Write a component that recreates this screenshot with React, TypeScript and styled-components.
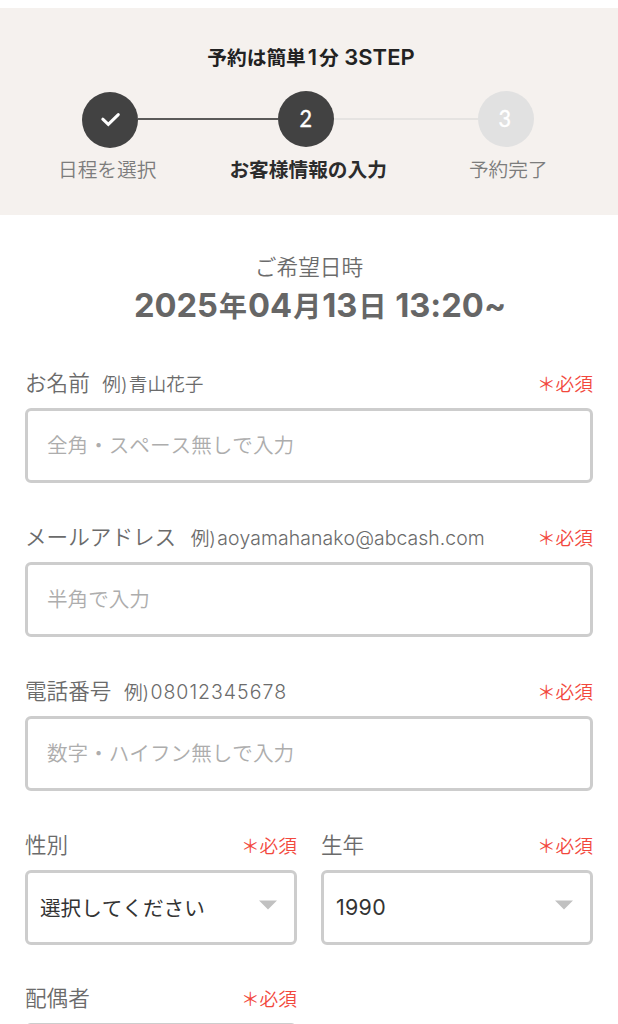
import React from "react";
import styled, { createGlobalStyle } from "styled-components";

const GlobalStyle = createGlobalStyle`
  * { box-sizing: border-box; }
  html, body { margin: 0; background: #fff; }
  body {
    width: 618px;
    height: 1024px;
    overflow: hidden;
    font-family: Inter, "Noto Sans CJK JP", sans-serif;
    font-weight: 350;
    font-kerning: none;
    color: #6b6b6b;
    font-feature-settings: "calt" 0;
  }
`;

const Page = styled.main`
  height: 1024px;
  padding-top: 8px;
  overflow: hidden;
`;

const StepPanel = styled.header`
  height: 207px;
  padding-top: 34px;
  background: #f5f1ee;
`;

const StepTitle = styled.h1`
  margin: 0;
  padding-left: 4px;
  font-size: 19.7px;
  line-height: 30px;
  height: 30px;
  font-weight: 600;
  text-align: center;
  color: #222;
`;

const TitleLatin = styled.span<{ $inset?: number }>`
  margin: 0 ${(p) => p.$inset ?? 0}px;
  font-size: 22px;
`;

const Track = styled.div`
  display: flex;
  align-items: center;
  height: 56px;
  margin: 18.5px 84px 0 82px;
`;

const StepDot = styled.div<{ $muted?: boolean; $drop?: number }>`
  display: flex;
  flex: none;
  align-items: center;
  justify-content: center;
  width: 56px;
  height: 56px;
  margin-top: ${(p) => p.$drop ?? 0}px;
  padding-right: ${(p) => (p.$muted ? 3 : 0)}px;
  border-radius: 50%;
  background: ${(p) => (p.$muted ? "#e1e1e1" : "#424242")};
  color: #fff;
  font-family: Lato, sans-serif;
  font-size: 23.5px;
  font-weight: 400;
  -webkit-text-stroke: 0.4px #fff;
`;

const Digit = styled.span`
  transform: translateY(-1px) scaleX(0.92);
`;

const Connector = styled.div<{ $muted?: boolean }>`
  flex: ${(p) => (p.$muted ? 144 : 140)} 1 0;
  height: 2px;
  background: ${(p) => (p.$muted ? "#e5e3e1" : "#5b5a59")};
`;

const StepLabels = styled.div`
  display: flex;
  margin: 8px 0 0 58px;
`;

const StepLabel = styled.span<{ $active?: boolean }>`
  margin-right: ${(p) => (p.$active ? 82 : 73)}px;
  font-size: 19.7px;
  line-height: 30px;
  white-space: nowrap;
  font-weight: ${(p) => (p.$active ? 600 : 350)};
  color: ${(p) => (p.$active ? "#2c2c2c" : "#7c7c7c")};
`;

const Schedule = styled.section`
  padding-top: 36px;
  text-align: center;
`;

const ScheduleLabel = styled.div`
  font-size: 21.7px;
  line-height: 32px;
`;

const ScheduleDate = styled.div`
  height: 44px;
  padding-left: 22px;
  font-size: 32.7px;
  line-height: 45px;
  font-weight: 700;
  white-space: nowrap;
  color: #666;
`;

const DateUnit = styled.span`
  margin: 0 1px;
  font-size: 28px;
`;

const Form = styled.form`
  display: grid;
  grid-template-columns: 272px 272px;
  column-gap: 24px;
  row-gap: 39px;
  padding: 40px 25px 0;
`;

const Field = styled.div<{ $wide?: boolean; $lift?: number }>`
  grid-column: ${(p) => (p.$wide ? "1 / -1" : "auto")};
  height: 115px;
  margin-top: ${(p) => -(p.$lift ?? 0)}px;
`;

const FieldHead = styled.div`
  display: flex;
  align-items: baseline;
  height: 41px;
  line-height: 32px;
  white-space: nowrap;
`;

const Label = styled.label`
  font-size: 21.6px;
`;

const Example = styled.span<{ $gap?: number; $size?: number; $tracking?: number }>`
  margin-left: ${(p) => p.$gap ?? 0}px;
  font-size: ${(p) => p.$size ?? 18.7}px;
  letter-spacing: ${(p) => p.$tracking ?? 0}px;
`;

const Required = styled.span`
  margin-left: auto;
  font-size: 18.7px;
  color: #f2483d;
`;

const boxBorder = "3px solid #cdcdcd";

const TextInput = styled.input`
  display: block;
  width: 100%;
  height: 75px;
  padding: 0 19px;
  border: ${boxBorder};
  border-radius: 6px;
  outline: 0;
  background: #fff;
  font: inherit;
  font-size: 20.6px;
  &::placeholder { color: #adadad; opacity: 1; }
`;

const SelectBox = styled.div`
  display: flex;
  align-items: center;
  justify-content: space-between;
  height: 75px;
  padding: 0 16px 2px 12px;
  border: ${boxBorder};
  border-radius: 6px;
  font-size: 20.6px;
  font-weight: 400;
  color: #333;
`;

const Year = styled.span`
  font-size: 21.4px;
  letter-spacing: 0.3px;
`;

const Arrow = styled.svg`
  display: block;
  width: 20px;
  height: 10px;
  margin-top: -3px;
`;

type TextFieldProps = {
  label: string;
  example: string;
  placeholder: string;
  gap: number;
  size?: number;
  tracking?: number;
};

function TextField({ label, example, placeholder, gap, size, tracking }: TextFieldProps) {
  return (
    <Field $wide>
      <FieldHead>
        <Label>{label}</Label>
        <Example $gap={gap}>例)</Example>
        <Example $gap={1.3} $size={size} $tracking={tracking}>{example}</Example>
        <Required>＊必須</Required>
      </FieldHead>
      <TextInput placeholder={placeholder} />
    </Field>
  );
}

type SelectFieldProps = {
  label: string;
  lift?: number;
  children?: React.ReactNode;
};

function SelectField({ label, lift, children }: SelectFieldProps) {
  return (
    <Field $lift={lift}>
      <FieldHead>
        <Label>{label}</Label>
        <Required>＊必須</Required>
      </FieldHead>
      <SelectBox>
        {children}
        <Arrow viewBox="0 0 20 10">
          <path d="M1 .5h18L10 9.5z" fill="#c1c1c1" />
        </Arrow>
      </SelectBox>
    </Field>
  );
}

export default function App() {
  return (
    <Page>
      <GlobalStyle />
      <StepPanel>
        <StepTitle>
          予約は簡単<TitleLatin $inset={2}>1</TitleLatin>分<TitleLatin> 3STEP</TitleLatin>
        </StepTitle>
        <Track>
          <StepDot $drop={3}>
            <svg width="24" height="20" viewBox="0 0 24 20" fill="none">
              <path d="M4.8 9.2l5.5 5.2L20.3 4.6" stroke="#fff" strokeWidth="3" strokeLinecap="round" />
            </svg>
          </StepDot>
          <Connector />
          <StepDot><Digit>2</Digit></StepDot>
          <Connector $muted />
          <StepDot $muted><Digit>3</Digit></StepDot>
        </Track>
        <StepLabels>
          <StepLabel>日程を選択</StepLabel>
          <StepLabel $active>お客様情報の入力</StepLabel>
          <StepLabel>予約完了</StepLabel>
        </StepLabels>
      </StepPanel>
      <Schedule>
        <ScheduleLabel>ご希望日時</ScheduleLabel>
        <ScheduleDate>
          2025<DateUnit>年</DateUnit>04<DateUnit>月</DateUnit>13<DateUnit>日</DateUnit> 13:20~
        </ScheduleDate>
      </Schedule>
      <Form>
        <TextField label="お名前" example="青山花子" placeholder="全角・スペース無しで入力" gap={12.5} />
        <TextField label="メールアドレス" example="aoyamahanako@abcash.com" placeholder="半角で入力" gap={14.5} size={19.4} tracking={0.08} />
        <TextField label="電話番号" example="08012345678" placeholder="数字・ハイフン無しで入力" gap={12.5} size={19.5} tracking={1} />
        <SelectField label="性別">選択してください</SelectField>
        <SelectField label="生年">
          <Year>1990</Year>
        </SelectField>
        <SelectField label="配偶者" lift={1} />
      </Form>
    </Page>
  );
}
